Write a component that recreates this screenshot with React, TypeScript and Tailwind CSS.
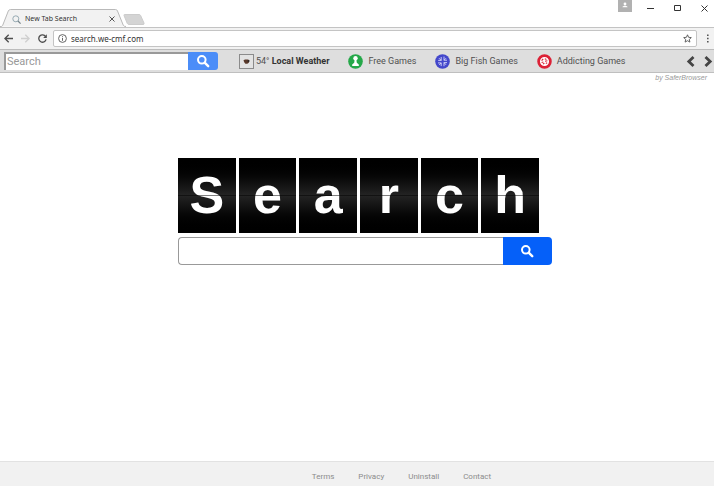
import React from 'react';

const LETTERS = ['S', 'e', 'a', 'r', 'c', 'h'];
const FOOTER_LINKS = ['Terms', 'Privacy', 'Uninstall', 'Contact'];

const SearchIcon = ({ className }: { className: string }) => (
    <svg viewBox="0 0 13 13" className={className} fill="none" stroke="currentColor" aria-hidden="true">
        <circle cx="4.8" cy="4.8" r="3.8" strokeWidth="2" />
        <path d="M7.9 7.9 11.2 11.2" strokeWidth="2.4" strokeLinecap="round" />
    </svg>
);

const WeatherIcon = () => (
    <svg viewBox="0 0 15 15" className="h-[15px] w-[15px]" aria-hidden="true">
        <rect x=".5" y=".5" width="14" height="14" fill="#e3e3e3" stroke="#8b8b8b" />
        <path d="M4.5 6.2 6 5.5h3.2l1.1 1-.5 2.2-1.5 1H6.4L5.2 8.3z" fill="#59392a" />
        <circle cx="9.5" cy="7" r="1" fill="#2e2725" />
    </svg>
);

const PawnIcon = () => (
    <svg viewBox="0 0 15 15" className="h-[15px] w-[15px]" aria-hidden="true">
        <circle cx="7.5" cy="7.5" r="7.3" fill="#25a849" />
        <circle cx="7.5" cy="4.3" r="2.2" fill="#fff" />
        <path d="M6.7 5.5h1.6l.5 3.2 2 1.7v1.7H4.2v-1.7l2-1.7z" fill="#fff" />
    </svg>
);

const FishIcon = () => (
    <svg viewBox="0 0 15 15" className="h-[15px] w-[15px]" aria-hidden="true">
        <circle cx="7.5" cy="7.5" r="7.3" fill="#4347cb" />
        <path
            d="M6.2 3v3.4H3.2M9 2.6v3.6h3M3 8.9h3.2v3.2M12 8.6H9v3.6M4 4.2l2.2 2.2M11 4.2 9 6.2M4.2 11l2-2.1M11 10.8 9 8.6"
            fill="none"
            stroke="#d5d6f8"
            strokeWidth=".9"
        />
    </svg>
);

const DiceIcon = () => (
    <svg viewBox="0 0 15 15" className="h-[15px] w-[15px]" aria-hidden="true">
        <circle cx="7.5" cy="7.5" r="5.9" fill="#fff" stroke="#dc2136" strokeWidth="2.7" />
        <path
            d="M4.6 6.6 6.2 5M7.8 4.7l1.6.7M4.6 8.6l1.8-.6M8 7.2l2.4-.4M5.9 10l1.5-.8M8.8 9.4l1.4-.6"
            stroke="#dc2136"
            strokeWidth="1.1"
            fill="none"
        />
    </svg>
);

const TOOLBAR_LINKS = [
    { label: 'Free Games', icon: <PawnIcon /> },
    { label: 'Big Fish Games', icon: <FishIcon /> },
    { label: 'Addicting Games', icon: <DiceIcon /> },
];

const TitleBar = () => (
    <div className="flex h-[28px] items-end border-b border-[#c3c3c3] bg-white">
        <div className="relative h-[18px] w-[126px]">
            <svg viewBox="0 0 126 18" className="absolute left-0 top-0 h-[18px] w-[126px]" aria-hidden="true">
                <path
                    d="M0 17.5h1.2q1 0 1.5-1.2L8.3 2Q9 .5 10.5.5h105q1.5 0 2 1.5l5.8 14.3q.5 1.2 2.7 1.2"
                    fill="#f2f2f2"
                    stroke="#b9b9b9"
                />
            </svg>
            <div className="relative flex h-[18px] items-center pl-3 pr-[11px] pt-[2px]">
                <svg viewBox="0 0 9 9" className="h-[9px] w-[9px]" fill="none" aria-hidden="true">
                    <circle cx="3.8" cy="3.8" r="3" stroke="#96aab2" />
                    <path d="m6 6 2.6 2.6" stroke="#77858b" strokeWidth="1.2" />
                </svg>
                <span className="flex-1 whitespace-nowrap pl-1 font-['Noto_Sans',sans-serif] text-[7px] leading-[10px] text-[#333]">
                    New Tab Search
                </span>
                <button type="button" aria-label="Close tab">
                    <svg viewBox="0 0 6 6" className="h-[6px] w-[6px]" stroke="#555" aria-hidden="true">
                        <path d="m.5.5 5 5m0-5-5 5" />
                    </svg>
                </button>
            </div>
        </div>
        <button type="button" aria-label="New tab" className="mb-[2px] -ml-[3px]">
            <svg viewBox="0 0 22 11" className="h-[11px] w-[22px]" aria-hidden="true">
                <path d="M1.5.5h14.7q1 0 1.4 1L21 9q.5 1.5-1 1.5H6q-1.2 0-1.8-1.2L1 1.5Q.7.5 1.5.5z" fill="#d4d4d4" stroke="#cccccc" />
            </svg>
        </button>
        <div className="ml-auto flex items-center self-start pr-[6px]">
            <button type="button" aria-label="Profile" className="mr-[15px]">
                <svg viewBox="0 0 14 12" className="h-[12px] w-[14px]" aria-hidden="true">
                    <path d="M0 0h14v12H0z" fill="#b1b1b1" />
                    <circle cx="7" cy="4" r="1.4" fill="#fff" />
                    <path d="M4.5 7.3V6.7Q5.5 5.7 7 5.7t2.5 1v.6z" fill="#fff" />
                </svg>
            </button>
            <button type="button" aria-label="Minimize" className="mr-5 pt-1">
                <svg viewBox="0 0 7 7" className="h-[7px] w-[7px]" stroke="#333" aria-hidden="true">
                    <path d="M0 3.5h7" />
                </svg>
            </button>
            <button type="button" aria-label="Maximize" className="mr-5 pt-1">
                <svg viewBox="0 0 7 7" className="h-[7px] w-[7px]" stroke="#333" fill="none" aria-hidden="true">
                    <path d="M.5.5h6v5h-6z" />
                </svg>
            </button>
            <button type="button" aria-label="Close window" className="pt-1">
                <svg viewBox="0 0 7 7" className="h-[7px] w-[7px]" stroke="#333" aria-hidden="true">
                    <path d="m.5.5 6 6m0-6-6 6" />
                </svg>
            </button>
        </div>
    </div>
);

const AddressBar = () => (
    <div className="flex h-[22px] items-center border-b border-[#bcbcbc] bg-[#f2f2f2] px-1">
        <button type="button" aria-label="Back">
            <svg viewBox="0 0 9 9" className="h-[9px] w-[9px]" fill="none" stroke="#4d4d4d" strokeWidth="1.3" aria-hidden="true">
                <path d="M9 4.5H1M4.7.7.9 4.5l3.8 3.8" />
            </svg>
        </button>
        <button type="button" aria-label="Forward" className="ml-2">
            <svg viewBox="0 0 9 9" className="h-[9px] w-[9px]" fill="none" stroke="#cfcfcf" strokeWidth="1.3" aria-hidden="true">
                <path d="M0 4.5h8M4.3.7l3.8 3.8-3.8 3.8" />
            </svg>
        </button>
        <button type="button" aria-label="Reload" className="ml-2">
            <svg viewBox="0 0 9 9" className="h-[9px] w-[9px]" fill="none" stroke="#4d4d4d" strokeWidth="1.3" aria-hidden="true">
                <path d="M7.6 2.5A3.7 3.7 0 1 0 8.1 5.4" />
                <path d="M8.8.3v3.6H5.2z" fill="#4d4d4d" stroke="none" />
            </svg>
        </button>
        <div className="ml-[6px] flex h-[17px] flex-1 items-center rounded-[2px] border border-[#c4c4c4] bg-white px-1">
            <svg viewBox="0 0 9 9" className="h-[9px] w-[9px]" fill="none" stroke="#555" strokeWidth=".9" aria-hidden="true">
                <circle cx="4.5" cy="4.5" r="3.9" />
                <path d="M4.5 4v2.8M4.5 2.2v1" />
            </svg>
            <input
                type="text"
                aria-label="Address"
                defaultValue="search.we-cmf.com"
                className="min-w-0 flex-1 bg-transparent pl-1 font-['Noto_Sans',sans-serif] text-[8px] leading-[12px] text-[#333] outline-none"
            />
            <button type="button" aria-label="Bookmark">
                <svg viewBox="0 0 9 9" className="h-[9px] w-[9px]" fill="none" stroke="#555" strokeWidth=".9" aria-hidden="true">
                    <path d="m4.5.8 1.1 2.5 2.7.3-2 1.8.6 2.7-2.4-1.4-2.4 1.4.6-2.7-2-1.8 2.7-.3z" />
                </svg>
            </button>
        </div>
        <button type="button" aria-label="Menu" className="ml-2">
            <svg viewBox="0 0 5 9" className="h-[9px] w-[5px]" fill="#555" aria-hidden="true">
                <path d="M2 .5h1.6v1.6H2zM2 3.7h1.6v1.6H2zM2 6.9h1.6v1.6H2z" />
            </svg>
        </button>
    </div>
);

const SearchToolbar = () => (
    <div className="flex h-[23px] items-center border-b border-[#bfbfbf] bg-[#dedede] pl-1 pr-px font-['Roboto',sans-serif] text-[9px] leading-[12px] text-[#505050]">
        <form className="flex h-[18px]" onSubmit={(e) => e.preventDefault()}>
            <input
                type="text"
                aria-label="Toolbar search"
                placeholder="Search"
                className="w-[184px] border-l-2 border-t-2 border-[#999] bg-white pl-px text-[11px] leading-[14px] outline-none placeholder:text-[#999]"
            />
            <button type="submit" aria-label="Search" className="flex w-[30px] items-center justify-center rounded-r-[3px] bg-[#4b8df8] text-white">
                <SearchIcon className="h-[13px] w-[13px]" />
            </button>
        </form>
        <nav className="ml-[21px] flex items-center gap-[19px] whitespace-nowrap">
            <a href="#weather" className="flex items-center gap-[2px]">
                <WeatherIcon />
                <span>
                    54° <b className="text-[#333]">Local Weather</b>
                </span>
            </a>
            {TOOLBAR_LINKS.map(({ label, icon }) => (
                <a key={label} href="#games" className="flex items-center gap-[5px]">
                    {icon}
                    {label}
                </a>
            ))}
        </nav>
        <div className="ml-auto flex gap-[9px] pt-px">
            <button type="button" aria-label="Previous">
                <svg viewBox="0 0 9 11" className="h-[11px] w-[9px]" fill="none" stroke="#444" strokeWidth="2.8" aria-hidden="true">
                    <path d="M7.5 1 2.8 5.5 7.5 10" />
                </svg>
            </button>
            <button type="button" aria-label="Next">
                <svg viewBox="0 0 9 11" className="h-[11px] w-[9px]" fill="none" stroke="#444" strokeWidth="2.8" aria-hidden="true">
                    <path d="M1.5 1 6.2 5.5 1.5 10" />
                </svg>
            </button>
        </div>
    </div>
);

export default function App() {
    return (
        <div className="flex min-h-screen flex-col bg-white">
            <TitleBar />
            <AddressBar />
            <SearchToolbar />

            <main className="flex flex-1 flex-col">
                <p className="pr-[7px] pt-px text-right font-['Liberation_Sans',sans-serif] text-[7px] italic leading-[8px] text-[#999]">
                    by SaferBrowser
                </p>

                <div className="mx-auto mt-[76px] w-[390px] pl-4">
                    <h1 aria-label="Search" className="grid w-[361px] grid-cols-6 gap-[3px] font-['Liberation_Sans',sans-serif] text-[52px] font-bold leading-[75px] text-white">
                        {LETTERS.map((letter) => (
                            <span
                                key={letter}
                                className="relative flex h-[75px] justify-center bg-linear-to-b from-black via-[#242424] to-black"
                            >
                                {letter}
                                <span className="absolute inset-x-0 top-[37px] h-px bg-black/50" />
                            </span>
                        ))}
                    </h1>
                    <form className="mt-1 flex h-[28px]" onSubmit={(e) => e.preventDefault()}>
                        <input
                            type="text"
                            aria-label="Search the web"
                            className="min-w-0 flex-1 rounded-l-[4px] border border-r-0 border-[#999] bg-white px-2 font-['Liberation_Sans',sans-serif] text-sm outline-none"
                        />
                        <button type="submit" aria-label="Search" className="flex w-[49px] items-center justify-center rounded-r-[4px] bg-[#0560f9] text-white">
                            <SearchIcon className="h-[13px] w-[13px]" />
                        </button>
                    </form>
                </div>
            </main>

            <footer className="flex h-[25px] items-end justify-center gap-6 border-t border-[#e2e2e2] bg-[#f1f1f1] pb-1 pl-[89px] font-['Roboto',sans-serif] text-[8px] leading-[10px] text-[#8c8c8c]">
                {FOOTER_LINKS.map((link) => (
                    <a key={link} href="#footer">
                        {link}
                    </a>
                ))}
            </footer>
        </div>
    );
}
